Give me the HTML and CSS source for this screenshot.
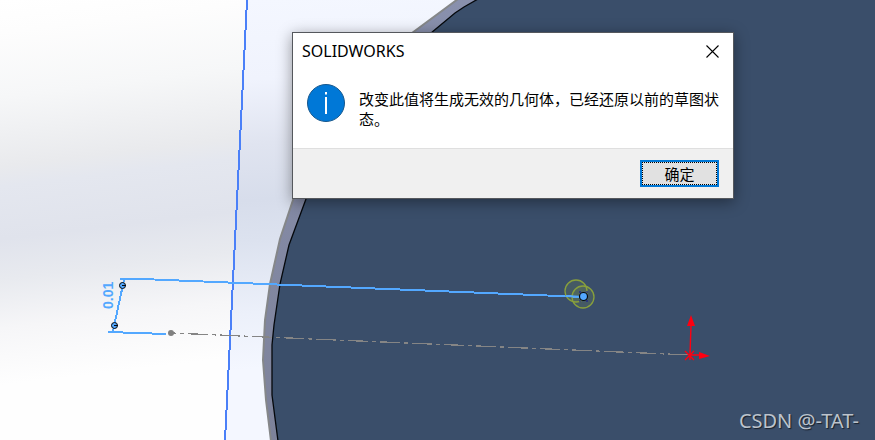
FILE: index.html
```html
<!DOCTYPE html>
<html lang="zh-CN">
<head>
<meta charset="utf-8">
<meta name="viewport" content="width=device-width, initial-scale=1">
<title>SOLIDWORKS</title>
<link rel="stylesheet" href="styles.css">
</head>
<body>
<main class="viewport">
  <svg class="scene" viewBox="0 0 875 440" preserveAspectRatio="xMidYMid slice" role="img" aria-label="草图">
    <defs>
      <linearGradient id="backdrop" gradientUnits="userSpaceOnUse" x1="0" y1="0" x2="48" y2="400">
        <stop offset="0" stop-color="#ffffff"/>
        <stop offset=".08" stop-color="#fdfdfd"/>
        <stop offset=".24" stop-color="#f6f7f8"/>
        <stop offset=".41" stop-color="#e9eaed"/>
        <stop offset=".46" stop-color="#e4e7ef"/>
        <stop offset=".59" stop-color="#e0e3ec"/>
        <stop offset=".69" stop-color="#e8eaef"/>
        <stop offset=".81" stop-color="#f6f6f8"/>
        <stop offset=".95" stop-color="#fefefe"/>
      </linearGradient>
      <linearGradient id="plane" gradientUnits="userSpaceOnUse" x1="240" y1="0" x2="270" y2="400">
        <stop offset="0" stop-color="#f4f7ff"/>
        <stop offset=".2" stop-color="#f0f3fd"/>
        <stop offset=".36" stop-color="#e0e4f0"/>
        <stop offset=".5" stop-color="#d7ddeb"/>
        <stop offset=".6" stop-color="#dce2ef"/>
        <stop offset=".78" stop-color="#ecf0fa"/>
        <stop offset=".92" stop-color="#f4f7ff"/>
      </linearGradient>
      <linearGradient id="rim" x1="0" y1="0" x2="0" y2="1">
        <stop offset="0" stop-color="#8990ad"/>
        <stop offset="1" stop-color="#7d829a"/>
      </linearGradient>
    </defs>
    <rect width="875" height="440" fill="url(#backdrop)"/>
    <path d="M247 0H875V440H225Z" fill="url(#plane)"/>
    <path d="M458 -1L412 33Q330 100 293 200L280 239L270 284L265 320L263 360L266 400L271 441H875V-1Z" fill="url(#rim)" stroke="#858789" stroke-width="2"/>
    <path d="M478 -1L464 7L455 13L431 33Q342 101 306 199L289 245L280 284L274 325L272 345V395L278 441H876V-1Z" fill="#3a4e6a" stroke="#05080c" stroke-width="1.3"/>
    <path d="M247 0L225 440" class="edge"/>
    <path d="M171 333L690 355" class="centerline"/>
    <circle cx="171" cy="333" r="3" fill="#808080"/>
    <g class="sketch">
      <path d="M120 279H142L584 297"/>
      <path d="M124 280L113 331"/>
      <path d="M108 332L166 334"/>
    </g>
    <g class="handle">
      <circle cx="122.500" cy="285.500" r="3"/><path d="M122 285.500H126"/>
      <circle cx="114.500" cy="325.500" r="3"/><path d="M114 325.500H118"/>
    </g>
    <text class="dimension" transform="translate(113 309) rotate(-90)">0.01</text>
    <g class="halo">
      <circle cx="576" cy="291" r="11"/>
      <circle cx="583" cy="297" r="11"/>
    </g>
    <path d="M566 296L584 297" class="edge-light"/>
    <path d="M579 292h2M586 292h2M579 301h2M586 301h2" stroke="#10109a" stroke-width="1"/>
    <circle cx="583.500" cy="296.500" r="4" fill="#53a8ff" stroke="#05080c" stroke-width="1.2"/>
    <g class="origin">
      <path d="M690 355L691 325M690 355H701M685 351L694 360M694 351L685 360M690 350V360"/>
      <path d="M691 315L695 326H687ZM710 356L699 352V359Z" fill="#ff0010" stroke="none"/>
    </g>
  </svg>

  <section class="dialog" role="dialog" aria-labelledby="dialog-title" aria-describedby="dialog-message">
    <header class="titlebar">
      <h1 id="dialog-title">SOLIDWORKS</h1>
      <button class="close" type="button" aria-label="关闭">
        <svg width="13" height="13" viewBox="0 0 13 13" aria-hidden="true"><path d="M.5 .5L12.500 12.500M12.500 .5L.5 12.500" stroke="#000" stroke-width="1.100"/></svg>
      </button>
    </header>
    <div class="content">
      <svg class="info" width="38" height="38" viewBox="0 0 38 38" aria-hidden="true">
        <circle cx="19" cy="19" r="18.500" fill="#0078d7" stroke="#16578d"/>
        <path d="M18 13H20V30H18ZM18 8H20V10.500H18Z" fill="#fff"/>
      </svg>
      <p id="dialog-message">改变此值将生成无效的几何体，已经还原以前的草图状态。</p>
    </div>
    <footer class="actions"><button class="confirm" type="button">确定</button></footer>
  </section>
  <span class="watermark">CSDN @-TAT-</span>
</main>
</body>
</html>
```
FILE: styles.css
```css
* { box-sizing: border-box; }

body {
  margin: 0;
  font-family: "Noto Sans", "Noto Sans CJK SC", sans-serif;
  color: #000;
}

.viewport {
  position: relative;
  min-height: 100vh;
  overflow: hidden;
}

.scene {
  display: block;
  width: 100%;
  height: 100vh;
}

.edge,
.centerline,
.sketch { shape-rendering: crispEdges; }

.edge { fill: none; stroke: #4b80f8; stroke-width: 2; }
.edge-light { stroke: #53a8ff; stroke-width: 2; }
.centerline { fill: none; stroke: #858585; stroke-width: 1.3; stroke-dasharray: 20 4 4 4; stroke-dashoffset: 15; }
.sketch { fill: none; stroke: #53a8ff; stroke-width: 2; }
.handle { fill: #53a8ff; stroke: #05080c; stroke-width: 1; }
.dimension { fill: #53a8ff; font-family: "Liberation Sans Narrow", "Liberation Sans", sans-serif; font-size: 14px; font-weight: bold; }
.halo { fill: rgba(160, 180, 60, .12); stroke: #89a03c; stroke-width: 1.3; }
.origin { fill: none; stroke: #ff0010; stroke-width: 1.4; }

.dialog {
  position: absolute;
  top: 32px;
  left: 292px;
  width: 442px;
  max-width: 100%;
  background: #fff;
  border: 1px solid #55585d;
  box-shadow: 0 3px 14px rgba(0, 0, 0, .4);
}

.titlebar {
  display: flex;
  align-items: center;
  justify-content: space-between;
  height: 36px;
  padding: 0 14px 0 9px;
}

h1 { margin: 0; font-size: 16px; font-weight: 400; line-height: 20px; }

button { margin: 0; padding: 0; font: inherit; color: inherit; }

.close { display: flex; border: 0; background: none; }

.content {
  display: flex;
  gap: 14px;
  padding: 15px 12px 19px 14px;
}

.info { flex: none; }

.content p {
  flex: 1;
  margin: 0;
  padding-top: 5px;
  font-family: "Noto Sans CJK SC", sans-serif;
  font-size: 15px;
  line-height: 20px;
}

.actions {
  display: flex;
  justify-content: flex-end;
  padding: 11px 14px;
  background: #f0f0f0;
  border-top: 1px solid #dfdfdf;
}

.confirm {
  width: 79px;
  height: 27px;
  border: 2px solid #0078d7;
  background: #e1e1e1;
  outline: 1px dotted #000;
  outline-offset: -3px;
  font-family: "Noto Sans CJK SC", sans-serif;
  font-size: 15px;
  line-height: 20px;
}

.watermark {
  position: absolute;
  right: 16px;
  bottom: 6px;
  color: #bcc3cc;
  font-size: 20px;
  line-height: 26px;
  text-shadow: 1px 1px 1px rgba(0, 0, 0, .6);
}
```
